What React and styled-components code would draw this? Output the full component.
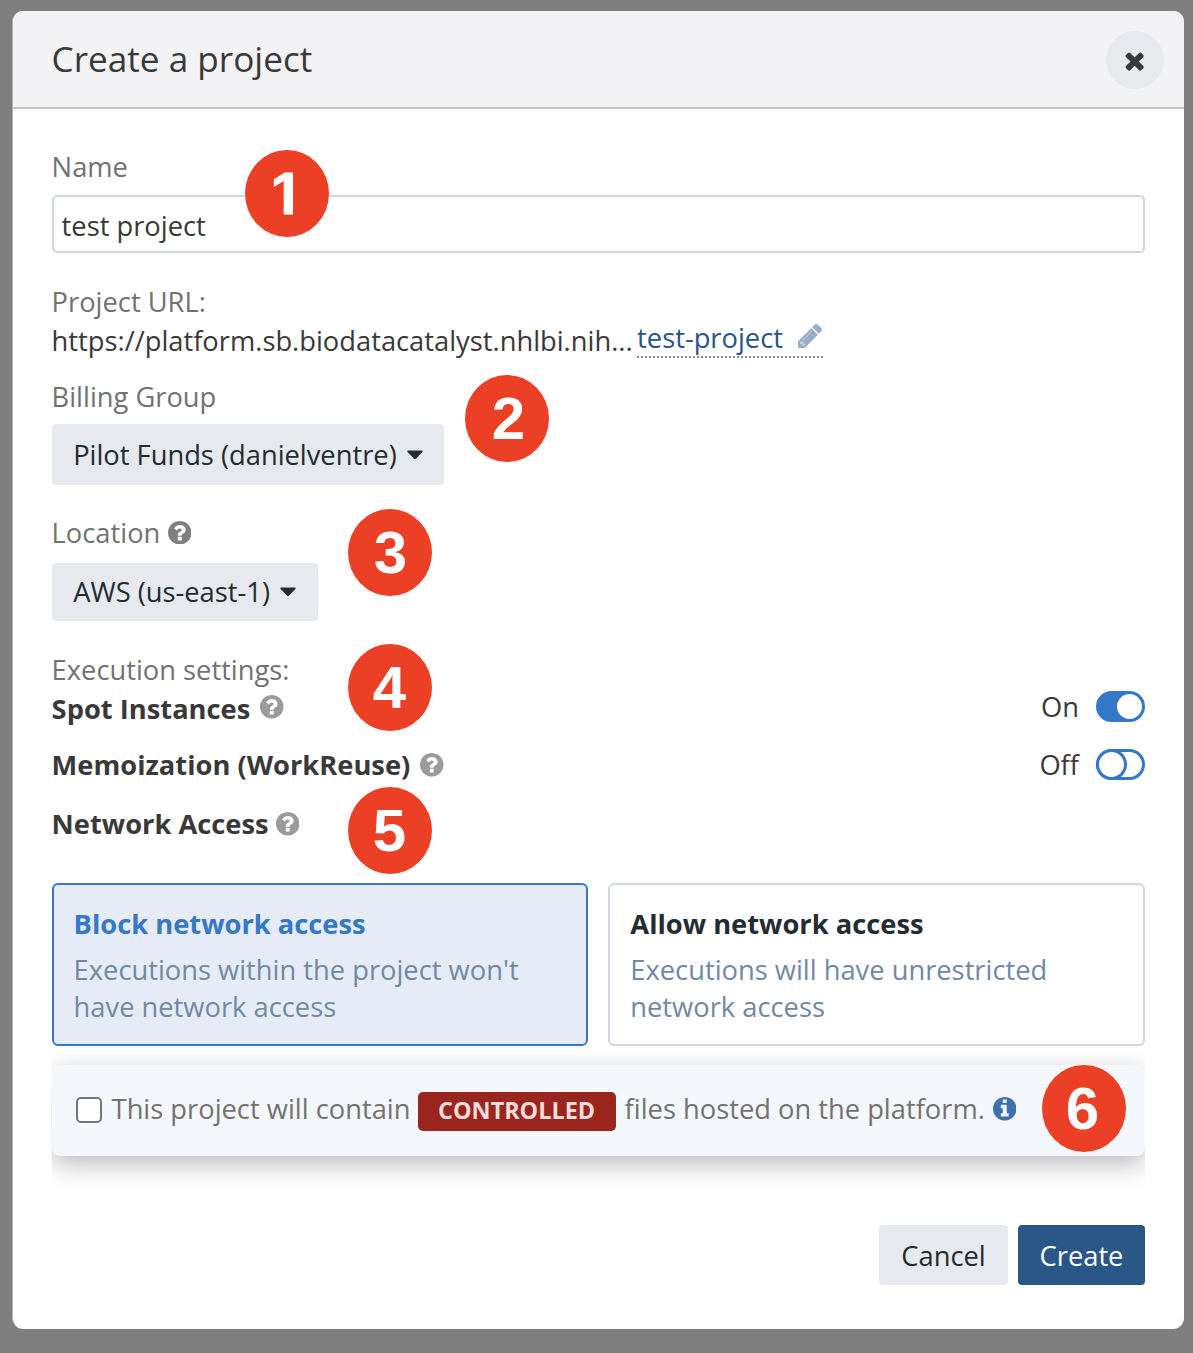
import React, { useState } from "react";
import styled, { createGlobalStyle, css } from "styled-components";

const GlobalStyle = createGlobalStyle`
  *, *::before, *::after { box-sizing: border-box; }
  body {
    margin: 0;
    background: #7f7f7f;
    font-family: "Open Sans", "Noto Sans", sans-serif;
    font-size: 27.3px;
    line-height: 39px;
    color: #393939;
  }
`;

const Backdrop = styled.div`
  position: relative;
  width: 1193px;
  height: 1353px;
  padding: 11px 9px 24px 12px;
  background: #7f7f7f;
  overflow: hidden;
`;

const Modal = styled.section`
  display: flex;
  flex-direction: column;
  height: 1318px;
  background: #fff;
  border-radius: 11px;
  overflow: hidden;
  border-left: 1px solid #b5b5b5;
`;

const Header = styled.header`
  display: flex;
  align-items: center;
  justify-content: space-between;
  height: 98px;
  padding: 0 20px 2px 38.5px;
  background: #f3f3f5;
  border-bottom: 2px solid #c4c4c4;
`;

const Title = styled.h1`
  margin: 0;
  font-size: 35.15px;
  font-weight: 400;
  line-height: 48px;
`;

const CloseButton = styled.button`
  display: flex;
  align-items: center;
  justify-content: center;
  width: 58px;
  height: 58px;
  margin-top: 4px;
  padding: 2px 0 0;
  border: 0;
  border-radius: 50%;
  background: #e6e9ee;
  color: #393939;
`;

const Body = styled.div`
  display: flex;
  flex-direction: column;
  align-items: stretch;
  padding: 38px 39px 0 38.6px;
`;

const Label = styled.div`
  display: flex;
  align-items: center;
  gap: 7.5px;
  height: 39px;
  margin-top: ${(p) => p.$top || 0}px;
  color: #727272;
`;

const NameInput = styled.input`
  width: 100%;
  height: 58px;
  margin-top: 9px;
  padding: 2px 8px 0;
  border: 2px solid #cfd8e0;
  border-radius: 5px;
  outline: 0;
  background: #fff;
  color: #393939;
  font: inherit;
`;

const UrlRow = styled.div`
  display: flex;
  align-items: flex-start;
  height: 39px;
`;

const UrlBase = styled.span`
  width: 585.5px;
  white-space: nowrap;
`;

const UrlSlug = styled.a`
  display: flex;
  align-items: center;
  justify-content: space-between;
  width: 186px;
  height: 39px;
  margin-top: -2px;
  padding: 0 1px 1px 0;
  border-bottom: 2px dotted #8c8c8c;
  color: #2a5585;
  white-space: nowrap;
`;

const Button = styled.button`
  display: flex;
  align-items: center;
  justify-content: center;
  gap: 10px;
  align-self: flex-start;
  width: ${(p) => p.$width}px;
  height: ${(p) => p.$height || 60}px;
  margin-top: ${(p) => p.$top || 0}px;
  padding: 0 0 ${(p) => p.$lift || 0}px;
  border: 0;
  border-radius: 4px;
  background: ${(p) => (p.$primary ? "#2a5788" : "#e6e9ee")};
  color: ${(p) => (p.$primary ? "#fff" : "#222c33")};
  font: inherit;
  white-space: nowrap;
`;

const SettingRow = styled.div`
  display: flex;
  align-items: center;
  justify-content: space-between;
  height: 39px;
  margin-top: ${(p) => p.$top || 0}px;
`;

const SettingName = styled.span`
  display: flex;
  align-items: center;
  gap: ${(p) => p.$gap}px;
  font-weight: 700;
`;

const SettingState = styled.div`
  display: flex;
  align-items: center;
  gap: 17px;
  margin-top: ${(p) => p.$shift || 0}px;
`;

const Switch = styled.button`
  display: flex;
  justify-content: ${(p) => (p.$on ? "flex-end" : "flex-start")};
  width: 49px;
  height: 31px;
  padding: 0;
  border: 3px solid #3577c8;
  border-radius: 16px;
  background: ${(p) => (p.$on ? "#3577c8" : "#fff")};
`;

const Knob = styled.span`
  width: 25px;
  height: 25px;
  border-radius: 50%;
  background: #fff;
  ${(p) => !p.$on && css`box-shadow: 0 0 0 3px #3577c8;`}
`;

const Options = styled.div`
  display: grid;
  grid-template-columns: 1fr 1fr;
  gap: 20px;
  margin-top: 40px;
`;

const OptionCard = styled.div`
  height: 163px;
  padding: 19px 20px 0;
  border: 2px solid ${(p) => (p.$selected ? "#3577c8" : "#cfd8e0")};
  border-radius: 6px;
  background: ${(p) => (p.$selected ? "#e5ecf8" : "#fff")};
`;

const OptionTitle = styled.div`
  color: ${(p) => (p.$selected ? "#3577c8" : "#222c33")};
  font-weight: 700;
`;

const OptionText = styled.div`
  margin-top: 8px;
  color: #7189a3;
  line-height: 37px;
`;

const ControlledPanel = styled.div`
  display: flex;
  align-items: center;
  height: 91px;
  margin-top: 19px;
  padding: 0 24px 4px;
  border-radius: 8px;
  background: #f4f7fc;
  color: #727272;
  box-shadow: 0 8px 26px rgba(0, 0, 0, 0.27);
  clip-path: inset(-20px 0 -44px 0);
  white-space: nowrap;
`;

const Checkbox = styled.span`
  width: 26px;
  height: 26px;
  margin: 3px 10px 0 0;
  border: 2px solid #767676;
  border-radius: 5px;
  background: #fff;
`;

const PanelText = styled.span`
  width: ${(p) => p.$width}px;
`;

const Tag = styled.span`
  width: 198px;
  height: 39px;
  margin: 6px 9px 0 0;
  border-radius: 5px;
  background: #99251e;
  color: #fadcda;
  font-size: 23.4px;
  font-weight: 700;
  line-height: 36px;
  text-align: center;
`;

const Footer = styled.footer`
  display: flex;
  justify-content: flex-end;
  gap: 10px;
  margin-top: 69px;
`;

const Marker = styled.span`
  position: absolute;
  left: ${(p) => p.$x}px;
  top: ${(p) => p.$y}px;
  width: 84px;
  height: 87px;
  border-radius: 50%;
  background: #eb4025;
  color: #fff;
  font: 700 60px/88px "Liberation Sans", Arial, sans-serif;
  text-align: center;
`;

const Digit = styled.span`
  display: block;
  width: 84px;
  height: 87px;
  margin-left: ${(p) => p.$nudge || 0}px;
  ${(p) =>
    p.$stemOnly &&
    css`
      -webkit-text-stroke: 1px #fff;
      clip-path: polygon(0 0, 100% 0, 100% 55px, 48px 55px, 48px 100%, 38.7px 100%, 38.7px 55px, 0 55px);
    `}
`;

const Glyph = styled.svg`
  display: block;
  flex: none;
  fill: currentColor;
  width: ${(p) => p.$size}px;
  height: ${(p) => p.$size}px;
  color: ${(p) => p.$color || "inherit"};
  margin-top: ${(p) => p.$top || 0}px;
`;

const RING =
  "q0 209-103 385.5t-279.5 279.5-385.5 103-385.5-103-279.5-279.5-103-385.5 103-385.5 279.5-279.5 385.5-103 385.5 103 279.5 279.5 103 385.5z";

const Help = ({ color = "#9b9b9b", top = 0 }) => (
  <Glyph $size={23.5} $color={color} $top={top} viewBox="128 128 1536 1536">
    <path d={"M1024 1376v-192q0-14-9-23t-23-9h-192q-14 0-23 9t-9 23v192q0 14 9 23t23 9h192q14 0 23-9t9-23zm256-672q0-88-55.5-163t-138.5-116-170-41q-243 0-371 213-15 24 8 42l132 100q7 6 19 6 16 0 25-12 53-68 86-92 34-24 86-24 48 0 85.5 26t37.5 59q0 38-20 61t-68 45q-63 28-115.5 86.5t-52.5 125.5v36q0 14 9 23t23 9h192q14 0 23-9t9-23q0-19 21.5-49.5t54.5-49.5q32-18 49-28.5t46-35 44.5-48 28-60.5 12.5-81zm384 192" + RING} />
  </Glyph>
);

const Info = () => (
  <Glyph $size={23.5} $color="#3b72b0" $top={1} viewBox="128 128 1536 1536">
    <path d={"M1152 1376v-160q0-14-9-23t-23-9h-96v-512q0-14-9-23t-23-9h-320q-14 0-23 9t-9 23v160q0 14 9 23t23 9h96v320h-96q-14 0-23 9t-9 23v160q0 14 9 23t23 9h448q14 0 23-9t9-23zm-128-896v-160q0-14-9-23t-23-9h-192q-14 0-23 9t-9 23v160q0 14 9 23t23 9h192q14 0 23-9t9-23zm640 416" + RING} />
  </Glyph>
);

const Times = () => (
  <Glyph $size={27.3} viewBox="0 0 1792 1792">
    <path d="M1490 1322q0 40-28 68l-136 136q-28 28-68 28t-68-28l-294-294-294 294q-28 28-68 28t-68-28l-136-136q-28-28-28-68t28-68l294-294-294-294q-28-28-28-68t28-68l136-136q28-28 68-28t68 28l294 294 294-294q28-28 68-28t68 28l136 136q28 28 28 68t-28 68l-294 294 294 294q28 28 28 68z" />
  </Glyph>
);

const Pencil = () => (
  <Glyph $size={24} $color="#9aacc6" $top={-2} viewBox="128 149 1515 1515">
    <path opacity="0.55" d="M960 416l416 416-832 832h-200l-216-216v-200z" />
    <path d="M491 1536l91-91-235-235-91 91v107h128v128h107zm523-928q0-22-22-22-10 0-17 7l-542 542q-7 7-7 17 0 22 22 22 10 0 17-7l542-542q7-7 7-17zm-54-192l416 416-832 832h-416v-416zm683 96q0 53-37 90l-166 166-416-416 166-165q36-38 90-38 53 0 91 38l235 234q37 39 37 91z" />
  </Glyph>
);

const Caret = () => (
  <Glyph $size={16} $top={1} viewBox="0 0 16 16">
    <path d="M1 3.5h14q1.2.3.4 1.5l-6.5 6.8q-.9.8-1.8 0L.6 5q-.8-1.2.4-1.5z" />
  </Glyph>
);

const Toggle = ({ on, onClick }) => (
  <Switch $on={on} onClick={onClick} role="switch" aria-checked={on}>
    <Knob $on={on} />
  </Switch>
);

const MARKERS = [
  { n: 1, x: 245, y: 150, nudge: 0 },
  { n: 2, x: 465, y: 375, nudge: 1.5 },
  { n: 3, x: 348, y: 509, nudge: 0.5 },
  { n: 4, x: 348, y: 644, nudge: -0.7 },
  { n: 5, x: 348, y: 787, nudge: -0.7 },
  { n: 6, x: 1042, y: 1065, nudge: -1.5 },
];

export default function App() {
  const [name, setName] = useState("test project");
  const [spot, setSpot] = useState(true);
  const [memo, setMemo] = useState(false);

  return (
    <Backdrop>
      <GlobalStyle />
      <Modal>
        <Header>
          <Title>Create a project</Title>
          <CloseButton><Times /></CloseButton>
        </Header>
        <Body>
          <Label>Name</Label>
          <NameInput value={name} onChange={(e) => setName(e.target.value)} />
          <Label $top={29}>Project URL:</Label>
          <UrlRow>
            <UrlBase>https://platform.sb.biodatacatalyst.nhlbi.nih...</UrlBase>
            <UrlSlug>test-project<Pencil /></UrlSlug>
          </UrlRow>
          <Label $top={17}>Billing Group</Label>
          <Button $width={392.7} $height={61} $top={8}>Pilot Funds (danielventre)<Caret /></Button>
          <Label $top={28}>Location<Help color="#808080" /></Label>
          <Button $width={266} $height={58} $top={11} $lift={2}>AWS (us-east-1)<Caret /></Button>
          <Label $top={29}>Execution settings:</Label>
          <SettingRow>
            <SettingName $gap={10}>Spot Instances<Help top={-3} /></SettingName>
            <SettingState $shift={-4}>On<Toggle on={spot} onClick={() => setSpot(!spot)} /></SettingState>
          </SettingRow>
          <SettingRow $top={17}>
            <SettingName $gap={10}>Memoization (WorkReuse)<Help top={1} /></SettingName>
            <SettingState>Off<Toggle on={memo} onClick={() => setMemo(!memo)} /></SettingState>
          </SettingRow>
          <SettingRow $top={20}>
            <SettingName $gap={7}>Network Access<Help top={1} /></SettingName>
          </SettingRow>
          <Options>
            <OptionCard $selected>
              <OptionTitle $selected>Block network access</OptionTitle>
              <OptionText>Executions within the project won't<br />have network access</OptionText>
            </OptionCard>
            <OptionCard>
              <OptionTitle>Allow network access</OptionTitle>
              <OptionText>Executions will have unrestricted<br />network access</OptionText>
            </OptionCard>
          </Options>
          <ControlledPanel>
            <Checkbox />
            <PanelText $width={306}>This project will contain</PanelText>
            <Tag>CONTROLLED</Tag>
            <PanelText $width={368}>files hosted on the platform.</PanelText>
            <Info />
          </ControlledPanel>
          <Footer>
            <Button $width={129}>Cancel</Button>
            <Button $width={127} $primary>Create</Button>
          </Footer>
        </Body>
      </Modal>
      {MARKERS.map((m) => (
        <Marker key={m.n} $x={m.x} $y={m.y}>
          <Digit $stemOnly={m.n === 1} $nudge={m.nudge}>{m.n}</Digit>
        </Marker>
      ))}
    </Backdrop>
  );
}
